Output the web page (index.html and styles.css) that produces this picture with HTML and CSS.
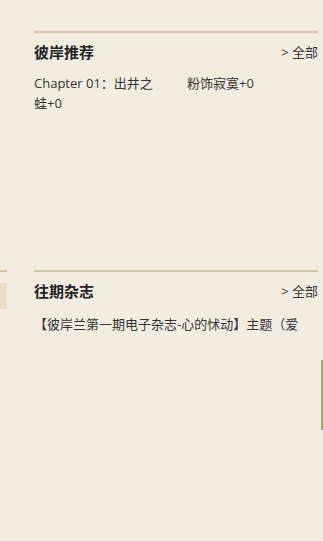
FILE: index.html
```html
<!DOCTYPE html>
<html lang="zh">
<head>
<meta charset="utf-8">
<link rel="stylesheet" href="styles.css">
</head>
<body>
<div class="page">
  <div class="side-left">
    <div class="stub-line"></div>
    <div class="stub-box"></div>
  </div>
  <main class="main">
    <section class="panel panel-rec">
      <div class="panel-head">
        <h2 class="panel-title">彼岸推荐</h2>
        <a class="more">&gt; 全部</a>
      </div>
      <div class="rec-list">
        <div class="rec-item">Chapter 01：出井之蛙+0</div>
        <div class="rec-item">粉饰寂寞+0</div>
      </div>
    </section>
    <section class="panel panel-mag">
      <div class="panel-head">
        <h2 class="panel-title">往期杂志</h2>
        <a class="more">&gt; 全部</a>
      </div>
      <div class="mag-item">【彼岸兰第一期电子杂志-心的怵动】主题（爱</div>
    </section>
  </main>
  <div class="side-right">
    <div class="green-bar"></div>
  </div>
</div>
</body>
</html>
```
FILE: styles.css
```css
html, body {
  margin: 0;
  padding: 0;
  background: #f3ede1;
}
body {
  font-family: "Open Sans", "Noto Sans CJK SC", sans-serif;
  color: #333;
  width: 323px;
  height: 541px;
  overflow: hidden;
}
.page {
  display: flex;
  height: 541px;
}
.side-left {
  width: 34px;
  flex: none;
  position: relative;
}
.stub-line {
  position: absolute;
  left: 0;
  top: 270px;
  width: 7px;
  height: 2px;
  background: #d3c4a6;
}
.stub-box {
  position: absolute;
  left: 0;
  top: 283px;
  width: 7px;
  height: 26px;
  background: #e9dfc8;
}
.main {
  width: 284px;
  flex: none;
}
.panel {
  border-top: 2px solid #d3c4a6;
}
.panel-rec {
  margin-top: 31px;
  height: 237px;
}
.panel-head {
  display: flex;
  justify-content: space-between;
  align-items: center;
  height: 37px;
}
.panel-title {
  margin: 0;
  font-size: 15px;
  font-weight: bold;
  color: #222;
}
.more {
  font-size: 13px;
  color: #333;
}
.rec-list {
  display: grid;
  grid-template-columns: 153px 1fr;
  font-size: 13px;
  line-height: 20px;
  margin-top: 3px;
}
.rec-item {
  width: 125px;
}
.mag-item {
  font-size: 13px;
  line-height: 20px;
  margin-top: 5px;
  white-space: nowrap;
}
.side-right {
  flex: 1;
  position: relative;
}
.green-bar {
  position: absolute;
  right: 0;
  top: 360px;
  width: 2px;
  height: 70px;
  background: #a3a77a;
}
```
